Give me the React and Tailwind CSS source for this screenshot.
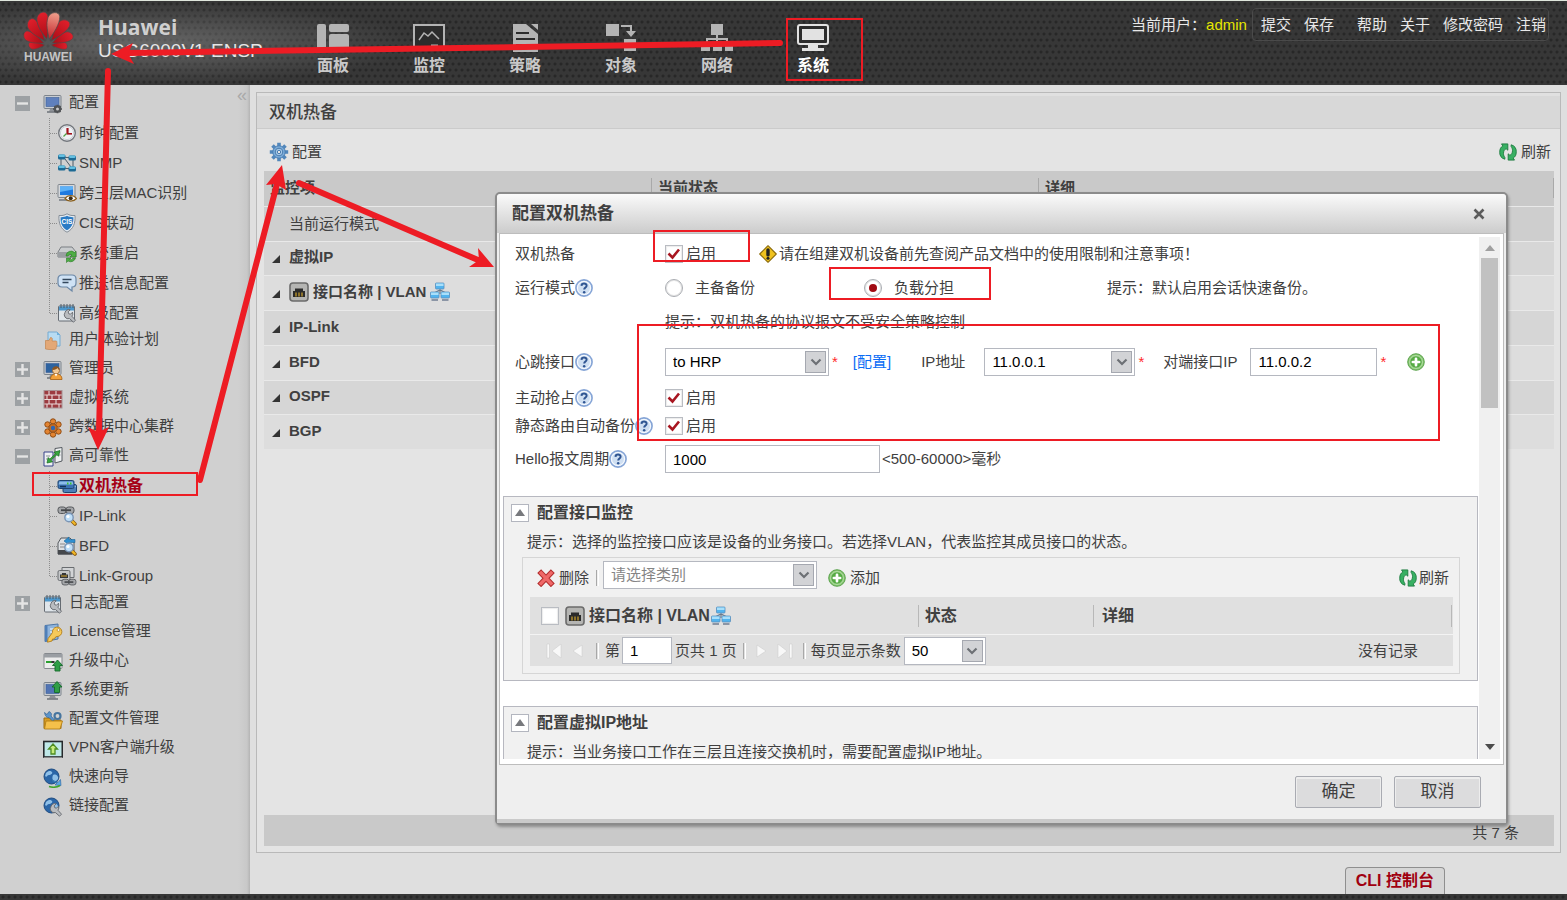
import React, { useState } from 'react';

/* ---------- small drawings ---------- */

function Svg({ size = 20, children, className = '' }) {
  return (
    <svg width={size} height={size} viewBox="0 0 20 20" fill="none" className={`shrink-0 ${className}`} aria-hidden="true">
      {children}
    </svg>
  );
}

const Wrench = () => (
  <g>
    <path d="M8 9.5a4 4 0 0 1 5.2-2.8l-2 2.2.5 1.8 1.8.5 2-2a4 4 0 0 1-.6 4l3.6 4-2 2-4-3.6A4 4 0 0 1 8 9.5z" fill="#b9bcc0" stroke="#63676c" strokeWidth="0.9" />
  </g>
);

const Magnifier = () => (
  <g>
    <path d="M15 15l3 3" stroke="#8a5a10" strokeWidth="3.6" strokeLinecap="round" />
    <path d="M15 15l2.8 2.8" stroke="#f2b825" strokeWidth="2.2" strokeLinecap="round" />
    <circle cx="12" cy="11.5" r="4.2" fill="#bfe0fa" stroke="#7b95b5" strokeWidth="1.4" />
    <circle cx="11" cy="10.5" r="1.6" fill="#fff" />
  </g>
);

const Chain = ({ y = 2 }) => (
  <g stroke="#55585c" strokeWidth="1">
    <rect x="1" y={y} width="8" height="6.5" rx="2.5" fill="#a4a6a9" />
    <rect x="9" y={y} width="8" height="6.5" rx="2.5" fill="#a4a6a9" />
    <path d={`M4 ${y + 3.2}h10`} stroke="#44474a" strokeWidth="1.8" />
  </g>
);

const UpArrow = ({ x = 0, y = 0 }) => (
  <path transform={`translate(${x} ${y})`} d="M5 0l5 5.5H7.5V11h-5V5.5H0z" fill="#2f9e46" stroke="#146a2b" strokeWidth="0.9" />
);

const Monitor = ({ fill = '#5f80bd' }) => (
  <g>
    <rect x="1" y="1.5" width="17" height="13" rx="1" fill="#c8ccd1" stroke="#7d848c" />
    <rect x="3" y="3.5" width="13" height="9" fill={fill} stroke="#3d5f96" strokeWidth="0.6" />
    <path d="M7 15h5l1 2.5H6z" fill="#8e9298" />
    <path d="M4 18h11" stroke="#72777d" strokeWidth="1.6" />
  </g>
);

const Notebook = () => (
  <g>
    <rect x="1.5" y="3" width="16" height="15" rx="1" fill="#dfe5ea" stroke="#656b72" />
    <path d="M2 3.5h15v4H2z" fill="#4c97cc" />
    <path d="M4 1v4M7 1v4M10 1v4M13 1v4M16 1v4" stroke="#4d5a66" strokeWidth="1" />
  </g>
);

const Globe = () => (
  <g>
    <circle cx="8.5" cy="8.5" r="7.5" fill="#2a66a8" stroke="#204c80" />
    <path d="M3 5c3-3 5-2 6-1s-1 3-3 3-2 3-4 1zM10 7c3-1 4 0 5 2s-2 5-4 4-2-4-1-6z" fill="#8fc0e8" />
  </g>
);

const treeIcons = {
  config: (
    <Svg>
      <Monitor />
      <path d="M14.500 10.700v8.600M10.200 15h8.600M11.500 12l6 6M17.500 12l-6 6" stroke="#505356" strokeWidth="1.800" />
      <circle cx="14.500" cy="15" r="2.600" fill="#c9c9c9" stroke="#505356" strokeWidth="2.200" />
    </Svg>
  ),
  clock: (
    <Svg>
      <circle cx="10" cy="10" r="8.300" fill="#f0f2f5" stroke="#73777d" strokeWidth="1.400" />
      <circle cx="10" cy="10" r="6.600" stroke="#cbd0d6" />
      <path d="M10.500 5v5.600" stroke="#a0121c" strokeWidth="2.200" />
      <path d="M9.500 10.800h5.500" stroke="#a0121c" strokeWidth="1.600" />
      <path d="M9.500 10.500l-3 3" stroke="#4ea045" strokeWidth="1.300" />
    </Svg>
  ),
  snmp: (
    <Svg>
      <path d="M5 4l10 1M4 5v10M16 6v10M5 15l10 1M8 6l6 8" stroke="#4b5a66" strokeWidth="1" />
      {[[1, 1.5], [11.5, 2.5], [1, 12.5], [11.5, 13.5]].map(([x, y]) => (
        <g key={`${x}-${y}`}>
          <rect x={x} y={y} width="7.500" height="5" rx="1.500" fill="#1d6a94" />
          <rect x={x + 0.5} y={y} width="6.500" height="2.500" rx="1.200" fill="#63c0e2" />
        </g>
      ))}
    </Svg>
  ),
  mac: (
    <Svg>
      <rect x="1" y="1.500" width="17" height="13" rx="1" fill="#d5d8dc" stroke="#80868d" />
      <rect x="3" y="3.500" width="13" height="8.500" fill="#1f7ae0" />
      <path d="M3 3.500h13v3L3 9z" fill="#5db1f7" />
      <path d="M2 17h8" stroke="#888d93" strokeWidth="2" />
      <path d="M8 15.500c3-4 8.500-4 11.500 0-3 3.500-8.500 3.500-11.500 0z" fill="#fff" stroke="#8a5f1d" strokeWidth="1.200" />
      <circle cx="13.700" cy="15.300" r="2" fill="#3a2a14" />
    </Svg>
  ),
  cis: (
    <Svg>
      <path d="M10 .8c2.500 1.600 5.300 2 8 1.700.5 7.500-1.500 13.500-8 16.700C3.500 16 1.500 10 2 2.500c2.700.3 5.500-.1 8-1.700z" fill="#e8edf2" stroke="#848d97" />
      <path d="M10 2.800c2.200 1.200 4.200 1.500 6.400 1.400.2 6-1.500 10.400-6.400 13-4.900-2.600-6.600-7-6.400-13 2.200.1 4.200-.2 6.400-1.400z" fill="#2b7bc4" />
      <text x="10" y="10.500" textAnchor="middle" fontSize="6.500" fontWeight="700" fill="#fff" fontFamily="Liberation Sans, sans-serif">CIS</text>
    </Svg>
  ),
  reboot: (
    <Svg>
      <path d="M4 4h11l4 5v5H1V9z" fill="#c9ccce" stroke="#7b7f83" />
      <path d="M1 9h18v5H1z" fill="#9b9fa3" />
      <path d="M9 13a5 5 0 0 1 8.500-3.500L19 8v6h-6l2-2a2.600 2.600 0 0 0-4 1zM18.500 15A5 5 0 0 1 11 18l-1.500 1.500V15H14l-1.500 1.500a2.600 2.600 0 0 0 3.500-1.500z" fill="#4eae45" stroke="#2c7a28" strokeWidth="0.600" />
    </Svg>
  ),
  message: (
    <Svg>
      <path d="M5 2h10c2.500 0 4 1.500 4 4v4c0 2.500-1.500 4-4 4v4l-5-4H5c-2.500 0-4-1.500-4-4V6c0-2.500 1.500-4 4-4z" fill="#cfe2f5" stroke="#6b87a6" strokeWidth="1.200" />
      <path d="M5.500 6.500h9M5.500 9.500h6" stroke="#33475c" strokeWidth="1.500" />
    </Svg>
  ),
  notes: (
    <Svg>
      <Notebook />
      <Wrench />
    </Svg>
  ),
  plan: (
    <Svg>
      <path d="M5 1h9l3 3v11H5z" fill="#b7dbf2" stroke="#76aad0" />
      <path d="M14 1v3h3" fill="#6fb1dd" />
      <path d="M2.500 9.500h3.500l1.500-3c1.500 0 2 .8 1.800 2.200L9 10h4c1 0 1.200 1.500.6 2 .7.700.6 1.800 0 2.200.5.800.2 1.800-.5 2.100.2 1-.2 2.200-1.500 2.200H6l-3.500-.5z" fill="#e3a877" stroke="#c4854f" strokeWidth="0.700" />
    </Svg>
  ),
  admin: (
    <Svg>
      <Monitor fill="#2d63a0" />
      <path d="M7.500 19.500c0-4 2-5.500 5.500-5.500s6 1.500 6 5.500z" fill="#f3a13a" stroke="#a35d12" strokeWidth="0.800" />
      <circle cx="13" cy="10.500" r="3.500" fill="#f2c896" stroke="#94622b" strokeWidth="0.800" />
      <path d="M9.300 10c0-5 7.500-5 7.500 0-2-.2-2-2-2-2s-2 2-5.500 2z" fill="#8a5524" />
      <path d="M11.500 14l1.500 2.500 1.500-2.500z" fill="#fff" />
    </Svg>
  ),
  wall: (
    <Svg>
      <rect x="1" y="1.500" width="18" height="17.500" fill="#9c3b40" />
      <path d="M1 6h18M1 10.500h18M1 15h18M6 2v4M13 2v4M9 6v4M16 6v4M4 6v4M6 10.500v4.500M13 10.500v4.500M9 15v4M16 15v4M4 15v4" stroke="#eadada" strokeWidth="1.100" />
      <rect x="1" y="1.500" width="18" height="17.500" stroke="#a89294" />
    </Svg>
  ),
  cluster: (
    <Svg>
      {[[10, 3.500], [15.500, 6.500], [15.500, 13.500], [10, 16.500], [4.500, 13.500], [4.500, 6.500]].map(([x, y]) => (
        <circle key={`${x}-${y}`} cx={x} cy={y} r="2.700" fill="#e38431" stroke="#8f4d16" />
      ))}
      <circle cx="10" cy="10" r="4.200" fill="#c86c22" stroke="#8f4d16" />
      <circle cx="10" cy="10" r="2.200" fill="#2e67b3" />
    </Svg>
  ),
  reliability: (
    <Svg>
      <path d="M12 1.500l7-1v13.500l-7 2z" fill="#eef0f2" stroke="#555a60" />
      <path d="M1 5h9v14H1z" fill="#eef0f2" stroke="#39438a" />
      <path d="M13.500 5h4M13.500 8h4M3 9h4M3 12h4" stroke="#8a9097" />
      <path d="M4 16l1.200-5.500 1.500 1.700 6-5.500L11 5.200l6-1.700-1.500 5.800-1.500-1.700-6 5.500 1.600 1.700z" fill="#37a83d" stroke="#186d20" strokeWidth="0.700" />
    </Svg>
  ),
  hotStandby: (
    <Svg>
      <rect x="6" y="8.500" width="13.500" height="8" rx="1.500" fill="#4d80b8" stroke="#1e4470" />
      <path d="M7 10.500h12" stroke="#8dbae4" strokeWidth="1.500" />
      <rect x="1" y="4.500" width="16" height="8" rx="1.500" fill="#3a73b4" stroke="#1e4470" />
      <path d="M2.500 5.500h13l1 3H1.500z" fill="#8cbde9" />
      <path d="M10 7.500h1.500M13 7.500h1.500" stroke="#3cc42c" strokeWidth="2" />
      <path d="M3 10.500h6" stroke="#133256" strokeWidth="1.500" />
    </Svg>
  ),
  ipLink: (
    <Svg>
      <Chain y={1} />
      <Magnifier />
    </Svg>
  ),
  bfd: (
    <Svg>
      <path d="M4 2h9l4 4v12H1V7z" fill="#dde0e3" stroke="#55595e" />
      <path d="M1 14h14v4.500H1z" fill="#45484c" />
      <path d="M3 8h5M3 11h5" stroke="#888" />
      <path d="M7 5l5-4v2.500h6v3h-6V9z" fill="#2f8fd0" stroke="#1d6598" strokeWidth="0.600" />
      <Magnifier />
    </Svg>
  ),
  linkGroup: (
    <Svg>
      <path d="M5 1.500h12v10H5z" fill="#d2d4d6" stroke="#696c70" />
      <rect x="1" y="4.500" width="12" height="10" rx="1.500" fill="#c4c6c8" stroke="#696c70" />
      <path d="M3 12V8.500h2V7h4v1.500h2V12z" fill="#35373a" />
      <path d="M5 11V9M7 11V9M9 11V9" stroke="#d9a82c" strokeWidth="1" />
      <g transform="translate(4 11.500) scale(.88)"><Chain y={2} /></g>
    </Svg>
  ),
  license: (
    <Svg>
      <path d="M2 2.500l13-1.500v15L2 18.500z" fill="#8fb4dc" stroke="#4f77a5" />
      <path d="M2 2.500h2.500v16L2 18.500z" fill="#4f7fb8" />
      <path d="M7 6h5M7 9h3" stroke="#fff" />
      <path d="M9.500 9.500a4.700 4.700 0 1 1 4.500 4l-1.500.5-1 2H9.500l-.5 2-4.500 1.200.5-3.500z" fill="#f5c95a" stroke="#b27e18" strokeWidth="0.900" />
      <circle cx="15.500" cy="7" r="1.400" fill="#fff" stroke="#b27e18" strokeWidth="0.700" />
    </Svg>
  ),
  upgrade: (
    <Svg>
      <rect x="1" y="1.500" width="18" height="15" rx="1" fill="#ececec" stroke="#85898e" />
      <path d="M1 2h18v3.500H1z" fill="#9a9ea3" />
      <path d="M3 10h8" stroke="#2aa02f" strokeWidth="2" />
      <path d="M8.500 10h3" stroke="#333" strokeWidth="2" />
      <UpArrow x={9.500} y={8} />
    </Svg>
  ),
  update: (
    <Svg>
      <Monitor fill="#5174b4" />
      <UpArrow x={9} y={0.500} />
    </Svg>
  ),
  files: (
    <Svg>
      <path d="M1 8h6l1.500 2H18v8.500H1z" fill="#d79b23" stroke="#9e6e10" />
      <circle cx="14.500" cy="6" r="3" stroke="#47759f" strokeWidth="2.200" />
      <path d="M1.500 2.500l2.500 2 2-3c2.500 1 3 3 2 4.500l3.500 4-2 1L6 7.500C4 8 2 6 1.500 2.500z" fill="#5b94cb" stroke="#33628f" strokeWidth="0.700" />
      <path d="M3 11h16.500L17 19H1.500z" fill="#f5c04a" stroke="#b37f17" strokeWidth="0.900" />
    </Svg>
  ),
  vpn: (
    <Svg>
      <rect x="0.800" y="2.500" width="18.500" height="15.500" fill="#bfe8e8" stroke="#26292c" strokeWidth="1.600" />
      <path d="M10 5l4.500 5H12v5H8v-5H5.500z" fill="#c5ec7c" stroke="#4d8c22" strokeWidth="1.300" />
      <path d="M1 18.500h18" stroke="#888" />
    </Svg>
  ),
  wizard: (
    <Svg>
      <Globe />
      <path d="M9 12l6 2.500 2.500-3 .5 6-6-.5 2-2-5-2z" fill="#5ba5e5" stroke="#27639c" strokeWidth="0.600" />
      <path d="M6 18.500c4 1.300 8 .8 11-1" stroke="#41a52c" strokeWidth="1.500" />
    </Svg>
  ),
  links: (
    <Svg>
      <Globe />
      <Wrench />
    </Svg>
  ),
};

// angle, width factor, length factor
const petals = [
  [-92, 0.6, 0.58], [92, 0.6, 0.58],
  [-66, 0.78, 0.8], [66, 0.78, 0.8],
  [-38, 0.9, 0.94], [38, 0.9, 0.94],
  [-12, 0.95, 1], [12, 0.95, 1],
];

function HuaweiLogo() {
  return (
    <svg width="52" height="40" viewBox="0 0 52 40" aria-hidden="true">
      <defs>
        <linearGradient id="petal" x1="0" y1="0" x2="0" y2="1">
          <stop offset="0" stopColor="#e01f2b" />
          <stop offset="1" stopColor="#a80d17" />
        </linearGradient>
        <linearGradient id="petalLight" x1="0" y1="0" x2="0" y2="1">
          <stop offset="0" stopColor="#f0a08c" />
          <stop offset="1" stopColor="#c2222a" />
        </linearGradient>
      </defs>
      <g transform="translate(26 35)">
        {petals.map(([angle, w, l]) => (
          <path
            key={angle} d="M0-6C-3-12-7-20-6-27-5-33 4-36 6-30 7.500-23 3.500-13 0-6z"
            transform={`rotate(${angle}) scale(${w} ${l})`}
            fill={angle === 12 ? 'url(#petalLight)' : 'url(#petal)'} stroke="#4a4a4a" strokeWidth="0.700"
          />
        ))}
      </g>
    </svg>
  );
}

const navIcons = {
  panel: (
    <g fill="#b4b4b4">
      <rect x="0" y="0" width="9" height="28" rx="2" />
      <rect x="12" y="0" width="20" height="8" rx="2" />
      <rect x="12" y="10" width="20" height="18" rx="2" />
    </g>
  ),
  monitor: (
    <g stroke="#b4b4b4" fill="none">
      <rect x="1" y="1" width="30" height="24" fill="#2c2c2c" strokeWidth="2" />
      <path d="M6 16l5-7 4 3 4-4 7 7" strokeWidth="1.500" />
      <path d="M18 22h7" strokeWidth="3" />
    </g>
  ),
  policy: (
    <g>
      <path d="M4 0h13l12 10v18H4z" fill="#b4b4b4" />
      <path d="M22 0h7v6z" fill="#b4b4b4" />
      <path d="M7 9h13M7 15h19M7 21h19" stroke="#2c2c2c" strokeWidth="2" />
    </g>
  ),
  object: (
    <g fill="#b4b4b4">
      <rect x="1" y="0" width="13" height="12" />
      <path d="M16 1h11v6h4l-5 6-5-6h4V3h-9z" />
      <rect x="19" y="15" width="12" height="12" />
    </g>
  ),
  network: (
    <g fill="#b4b4b4">
      <rect x="10" y="0" width="12" height="11" />
      <path d="M15 11h2v3h10v8h-2v-6h-8v6h-2v-6H7v6H5v-8h10z" />
      <rect x="0" y="20" width="9" height="7" />
      <rect x="12" y="20" width="9" height="7" />
      <rect x="24" y="20" width="8" height="7" />
    </g>
  ),
  system: (
    <g>
      <rect x="1" y="1" width="30" height="19" rx="2" fill="#2c2c2c" stroke="#e2e2e2" strokeWidth="2" />
      <rect x="5" y="5" width="22" height="11" fill="#e2e2e2" />
      <path d="M11 20h10v4h6v3H5v-3h6z" fill="#e2e2e2" />
    </g>
  ),
};

const GearIcon = () => (
  <Svg>
    <g stroke="#5287bb" strokeWidth="3.600">
      <path d="M10 .8v18.400M.8 10h18.400M3.500 3.500l13 13M16.500 3.500l-13 13" />
    </g>
    <circle cx="10" cy="10" r="6.200" fill="#7cacd9" stroke="#4a7eb3" />
    <circle cx="10" cy="10" r="3.800" fill="#a9cbea" stroke="#4a7cae" />
    <circle cx="10" cy="10" r="1.700" fill="#e6e6e6" stroke="#4a7cae" />
  </Svg>
);

const RefreshIcon = () => (
  <Svg size={18}>
    {[0, 180].map((turn) => (
      <path
        key={turn} transform={`rotate(${turn} 10 10)`}
        d="M6.500 18C2.500 17 .8 14 .8 10.500.8 6.500 2 4.500 4.300 3.300L2.800 1h7v7L7.800 6.200C6 7.500 5 9 5 11.500c0 2.500.8 3.500 1.500 4.500z"
        fill="#38b063" stroke="#1c7a3e" strokeWidth="1" strokeLinejoin="round"
      />
    ))}
  </Svg>
);

const AddIcon = () => (
  <Svg size={18}>
    <circle cx="10" cy="10" r="9.200" fill="#8cc978" stroke="#4c9a3c" />
    <circle cx="10" cy="10" r="7" fill="#57ab45" stroke="#d5efca" strokeWidth="0.800" />
    <path d="M10 6.500v7M6.500 10h7" stroke="#fff" strokeWidth="3" strokeLinecap="round" />
  </Svg>
);

const DeleteIcon = () => (
  <Svg size={18}>
    <path d="M4.500 4.500l11 11.500M15.500 4.500l-11 11.500" stroke="#b32c2c" strokeWidth="6" strokeLinecap="square" />
    <path d="M4.500 4.500l11 11.500M15.500 4.500l-11 11.500" stroke="#ef6868" strokeWidth="3.800" strokeLinecap="square" />
  </Svg>
);

const WarnIcon = () => (
  <Svg size={18}>
    <path d="M10 .8L19.200 10 10 19.200.8 10z" fill="#f0c21e" stroke="#8b6a08" strokeWidth="1.200" strokeLinejoin="round" />
    <path d="M10 5.500v5.500" stroke="#222" strokeWidth="3.800" strokeLinecap="round" />
    <circle cx="10" cy="14.800" r="1.700" fill="#222" />
  </Svg>
);

const PortIcon = () => (
  <Svg>
    <rect x="1" y="1" width="18" height="18" rx="3" fill="#b5b5b3" stroke="#6b6b6b" strokeWidth="1.600" />
    <path d="M4 15V9h2V6.500h8V9h2v6z" fill="#2b2b2b" />
    <path d="M7 14.500v-4M10 14.500v-4M13 14.500v-4" stroke="#c39a2b" strokeWidth="1.300" />
  </Svg>
);

const VlanIcon = () => (
  <Svg size={20}>
    <path d="M10 6v6M4 11l6-3 6 3" stroke="#6a7a8a" strokeWidth="1.200" />
    {[[5.500, 1], [0.500, 10], [11, 10]].map(([x, y]) => (
      <g key={`${x}-${y}`}>
        <rect x={x} y={y} width="8.500" height="6" rx="0.800" fill="#52b4ee" stroke="#5c8fbc" strokeWidth="0.800" />
        <path d={`M${x + 0.500} ${y + 0.500}h7.500v2.500h-7.500z`} fill="#a9dffa" />
      </g>
    ))}
    <path d="M1.500 18h6.500M12 18h6.500" stroke="#8b95a5" strokeWidth="1.800" />
  </Svg>
);

/* ---------- shared controls ---------- */

function HelpButton() {
  return (
    <button type="button" aria-label="帮助" className="shrink-0">
      <svg width="18" height="18" viewBox="0 0 20 20" aria-hidden="true">
        <circle cx="10" cy="10" r="9" fill="#dbe8f8" stroke="#86a5d6" strokeWidth="1.800" />
        <circle cx="10" cy="10" r="7.200" fill="#cfdff2" stroke="#fff" />
        <path d="M7.200 7.600c.2-3.400 5.800-3.300 5.700-.1 0 2-2.700 2-2.700 4.300" fill="none" stroke="#2f5592" strokeWidth="2.200" />
        <circle cx="10.200" cy="14.700" r="1.400" fill="#2f5592" />
      </svg>
    </button>
  );
}

function CheckBox({ label, defaultChecked, name }) {
  return (
    <label className="flex items-center gap-[3px]">
      <span className="relative h-[18px] w-[18px]">
        <input
          type="checkbox" defaultChecked={defaultChecked} aria-label={label || name}
          className="peer block h-[18px] w-[18px] appearance-none border border-[#b9bcc2] bg-white shadow-[inset_0_0_1px_1px_#ececec]"
        />
        <svg width="18" height="18" viewBox="0 0 18 18" className="pointer-events-none absolute inset-0 hidden peer-checked:block" aria-hidden="true">
          <path d="M3.500 8.500l4 4 6.500-8" fill="none" stroke="#a81620" strokeWidth="2.600" />
        </svg>
      </span>
      {label}
    </label>
  );
}

function ModeRadio({ label, checked, onChange }) {
  return (
    <label className="flex items-center gap-3">
      <span className="relative h-[18px] w-[18px]">
        <input
          type="radio" name="mode" checked={checked} onChange={onChange}
          className="peer block h-[18px] w-[18px] appearance-none rounded-full border border-[#a9acb1] bg-white shadow-[inset_0_0_0_1px_#e4e4e4]"
        />
        <span className="pointer-events-none absolute inset-[5px] hidden rounded-full bg-[#a00a12] peer-checked:block" />
      </span>
      {label}
    </label>
  );
}

function SelectBox({ label, options, className = '', textClass = 'text-black' }) {
  return (
    <div className={`relative shrink-0 ${className}`}>
      <select aria-label={label} className={`h-7 w-full appearance-none border border-[#b5b8c0] bg-white pl-[7px] pr-7 outline-none ${textClass}`}>
        {options.map((o) => <option key={o}>{o}</option>)}
      </select>
      <span className="pointer-events-none absolute right-[3px] top-[3px] flex h-[22px] w-[21px] items-center justify-center border border-[#a5a8b0] bg-[#d2d3d6]">
        <svg width="12" height="8" viewBox="0 0 12 8" aria-hidden="true">
          <path d="M1.500 1.500L6 6l4.500-4.500" fill="none" stroke="#6d7075" strokeWidth="2.200" />
        </svg>
      </span>
    </div>
  );
}

const Required = () => <span className="ml-[3px] text-[#ff2a2a]">*</span>;

const Sep = () => <span className="h-4 w-[3px] shrink-0 border-l border-r border-l-[#a8a8a8] border-r-white" />;

/* ---------- header ---------- */

const navItems = [
  ['panel', '面板'],
  ['monitor', '监控'],
  ['policy', '策略'],
  ['object', '对象'],
  ['network', '网络'],
  ['system', '系统'],
];

const dots = 'bg-[#373737] bg-[radial-gradient(circle_at_3px_3px,#262626_0,#282828_1px,transparent_2px),radial-gradient(circle_at_3px_3px,#262626_0,#282828_1px,transparent_2px)] bg-[size:6px_12px] bg-[position:0_0,3px_6px]';

function Header() {
  return (
    <header className={`relative flex h-[85px] shrink-0 border-t border-[#dfe6dc] ${dots}`}>
      <div className="pointer-events-none absolute inset-y-0 left-0 w-[420px] bg-[radial-gradient(ellipse_at_35%_50%,rgba(150,150,150,0.5),transparent_70%)]" />
      <div className="relative flex w-[285px] shrink-0">
        <div className="ml-[22px] flex w-[76px] flex-col pt-[9px]">
          <HuaweiLogo />
          <span className="w-[52px] text-center text-[12px] leading-[14px] font-bold text-[#c4c4c4]">HUAWEI</span>
        </div>
        <div className="pt-3">
          <div className="font-['Open_Sans',sans-serif] text-[21px] leading-7 font-bold text-[#cfcfcf]">Huawei</div>
          <div className="text-[19px] leading-5 text-[#e6e6e6]">USG6000V1-ENSP</div>
        </div>
      </div>
      <nav className="relative flex">
        {navItems.map(([id, label]) => (
          <a
            key={id} href={`#${id}`}
            className={`flex w-24 flex-col items-center pt-[23px] text-[16px] leading-6 font-bold ${id === 'system' ? 'text-white' : 'text-[#c9c9c9]'}`}
          >
            <svg width="32" height="28" viewBox="0 0 32 28" className="mb-[2px]" aria-hidden="true">{navIcons[id]}</svg>
            {label}
          </a>
        ))}
      </nav>
      <div className="relative ml-auto mr-[18px] mt-[7px] flex h-[33px] items-center text-[#e8e8e8]">
        <span>当前用户：</span>
        <span className="mr-[5px] text-[#e6e600]">admin</span>
        <div className="flex h-full items-center gap-[13px] rounded-sm border border-[#4a4a4a] pr-[2px] pl-2">
          <a href="#commit">提交</a>
          <a href="#save" className="mr-[10px]">保存</a>
          <a href="#help">帮助</a>
          <a href="#about">关于</a>
          <a href="#password">修改密码</a>
          <a href="#logout">注销</a>
        </div>
      </div>
    </header>
  );
}

/* ---------- sidebar ---------- */

const tree = [
  {
    icon: 'config', label: '配置', open: true,
    children: [
      ['clock', '时钟配置'],
      ['snmp', 'SNMP'],
      ['mac', '跨三层MAC识别'],
      ['cis', 'CIS联动'],
      ['reboot', '系统重启'],
      ['message', '推送信息配置'],
      ['notes', '高级配置'],
    ],
  },
  { icon: 'plan', label: '用户体验计划' },
  { icon: 'admin', label: '管理员', open: false },
  { icon: 'wall', label: '虚拟系统', open: false },
  { icon: 'cluster', label: '跨数据中心集群', open: false },
  {
    icon: 'reliability', label: '高可靠性', open: true,
    children: [
      ['hotStandby', '双机热备'],
      ['ipLink', 'IP-Link'],
      ['bfd', 'BFD'],
      ['linkGroup', 'Link-Group'],
    ],
  },
  { icon: 'notes', label: '日志配置', open: false },
  { icon: 'license', label: 'License管理' },
  { icon: 'upgrade', label: '升级中心' },
  { icon: 'update', label: '系统更新' },
  { icon: 'files', label: '配置文件管理' },
  { icon: 'vpn', label: 'VPN客户端升级' },
  { icon: 'wizard', label: '快速向导' },
  { icon: 'links', label: '链接配置' },
];

function Sidebar() {
  return (
    <aside className="relative w-[250px] shrink-0 overflow-hidden bg-[#d0d0d0] bg-[linear-gradient(to_left,#b4b4b4,#c8c8c8_3px,#d0d0d0_12px)] pt-1">
      <button type="button" aria-label="收起" className="absolute top-0 right-[2px] h-5 w-3 text-[18px] leading-5 text-[#a9a9a9]">«</button>
      <ul>
        {tree.map((node) => (
          <li key={node.label}>
            <div className="flex h-[29px] items-center pl-[15px]">
              {node.open === undefined ? (
                <span className="w-[15px]" />
              ) : (
                <button type="button" aria-label={node.open ? '折叠' : '展开'} className="flex h-[15px] w-[15px] items-center justify-center bg-[#9da1a4]">
                  <svg width="11" height="11" viewBox="0 0 11 11" aria-hidden="true">
                    <path d={node.open ? 'M0 5.500h11' : 'M0 5.500h11M5.500 0v11'} stroke="#e4e4e4" strokeWidth="2.400" />
                  </svg>
                </button>
              )}
              <span className="ml-[13px] mr-[6px]">{treeIcons[node.icon]}</span>
              <a href={`#${node.icon}`} className="pb-1">{node.label}</a>
            </div>
            {node.children && (
              <ul className="relative -mb-[2px]">
                <li aria-hidden="true" className="absolute top-0 bottom-[15px] left-[49px] border-l border-dotted border-[#8c8c8c]" />
                {node.children.map(([icon, label]) => (
                  <li key={label} className="flex h-[30px] items-center pl-[50px]">
                    <span className="w-[7px] border-t border-dotted border-[#8c8c8c]" />
                    {treeIcons[icon]}
                    <a href={`#${icon}`} className={`ml-[2px] ${icon === 'hotStandby' ? 'text-[16px] font-bold text-[#a50016]' : ''}`}>{label}</a>
                  </li>
                ))}
              </ul>
            )}
          </li>
        ))}
      </ul>
    </aside>
  );
}

/* ---------- status panel ---------- */

const groups = ['虚拟IP', '接口名称 | VLAN', 'IP-Link', 'BFD', 'OSPF', 'BGP'];

function StatusPanel() {
  return (
    <section className="ml-[6px] mr-[6px] mt-[7px] flex flex-1 flex-col border border-[#b9b9b9] bg-[#e4e4e4]">
      <h1 className="flex h-9 shrink-0 items-center border-b border-t-[3px] border-b-[#cbcbcb] border-t-[#e0e0e0] bg-[#d8d8d8] pl-3 pt-[2px] text-[17px] font-medium">双机热备</h1>
      <div className="flex h-[42px] shrink-0 items-center justify-between pl-3 pr-[9px] pt-[3px]">
        <button type="button" className="flex items-center gap-[3px]"><GearIcon />配置</button>
        <button type="button" className="flex items-center gap-1"><RefreshIcon />刷新</button>
      </div>
      <div className="ml-[7px] mr-[6px] flex flex-1 flex-col">
        <table className="w-full table-fixed border-collapse text-left">
          <thead>
            <tr className="h-[35px] bg-[#c9c9c9] font-bold">
              <th className="w-[30%] pl-[6px]">监控项</th>
              <th className="w-[30%]"><span className="block h-5 border-l border-[#a9a9a9] pl-[6px] leading-5">当前状态</span></th>
              <th className="w-[40%]"><span className="block h-5 border-x border-[#a9a9a9] pl-[6px] leading-5">详细</span></th>
            </tr>
          </thead>
          <tbody>
            <tr className="h-[35px] border-t border-[#e9e9e9] bg-[#cecece]">
              <td className="pl-[25px]">当前运行模式</td>
              <td />
              <td />
            </tr>
            {groups.map((g, i) => (
              <tr key={g} className={`border-t border-[#e9e9e9] odd:bg-[#dddddd] even:bg-[#d6d6d6] ${i % 4 === 0 ? 'h-[34px]' : 'h-[35px]'}`}>
                <td className="pb-[2px] pl-2" colSpan={3}>
                  <div className="flex items-center font-bold">
                    <svg width="8" height="8" viewBox="0 0 8 8" className="mr-[9px] mt-1" aria-hidden="true"><path d="M8 0v8H0z" fill="#333" /></svg>
                    {i === 1 && <span className="mr-1"><PortIcon /></span>}
                    {g}
                    {i === 1 && <span className="ml-1"><VlanIcon /></span>}
                  </div>
                </td>
              </tr>
            ))}
          </tbody>
        </table>
        <div className="mb-[6px] mt-auto flex h-[31px] items-center justify-end bg-[#c9c9c9] pr-[35px] pt-1">共 7 条</div>
      </div>
    </section>
  );
}

/* ---------- dialog ---------- */

function Row({ label, help, className, children }) {
  return (
    <div className={`flex items-center ${className}`}>
      <div className="flex w-[150px] shrink-0 items-center whitespace-nowrap">
        {label}
        {help && <HelpButton />}
      </div>
      {children}
    </div>
  );
}

function Fieldset({ title, hint, className = '', children }) {
  return (
    <section className={`border border-[#b7b8c0] bg-[#f1f1f1] ${className}`}>
      <h3 className="flex h-[30px] items-center gap-2 pl-[7px] pt-[1px] text-[16px] font-bold">
        <button type="button" aria-label="收起" className="flex h-[18px] w-[18px] items-center justify-center border border-[#b3b6bf] bg-white">
          <svg width="10" height="7" viewBox="0 0 10 7" aria-hidden="true"><path d="M5 0l5 7H0z" fill="#77797d" /></svg>
        </button>
        {title}
      </h3>
      <p className="flex h-[30px] items-center pl-[23px]">{hint}</p>
      {children}
    </section>
  );
}

function PagerButton({ label, d, flip }) {
  return (
    <button type="button" aria-label={label}>
      <svg width="16" height="16" viewBox="0 0 16 16" className={flip ? '-scale-x-100' : ''} aria-hidden="true">
        <path d={d} fill="#f8f8f8" stroke="#c8c8c8" strokeWidth="0.500" />
      </svg>
    </button>
  );
}

const firstPath = 'M1 1h2.500v14H1zM15 1v14L6 8z';
const prevPath = 'M12 2v12L3 8z';

function MonitorTable() {
  return (
    <div className="mb-[6px] ml-[18px] mr-[17px] border border-[#d6d6d6] pb-[7px]">
      <div className="flex h-[39px] items-center pl-[14px] pr-[10px]">
        <div className="flex flex-1 items-center">
          <button type="button" className="flex items-center gap-1"><DeleteIcon />删除</button>
          <span className="mx-[7px] flex"><Sep /></span>
          <div className="-mt-[6px] -ml-[3px]"><SelectBox label="类别" options={['请选择类别']} className="w-[214px]" textClass="text-[#858585]" /></div>
          <button type="button" className="ml-[11px] flex items-center gap-1"><AddIcon />添加</button>
        </div>
        <button type="button" className="flex items-center gap-[2px]"><RefreshIcon />刷新</button>
      </div>
      <div className="ml-[7px] mr-[6px]">
        <table className="w-full table-fixed border-collapse bg-[#e0e0e0] text-left text-[16px]">
          <thead>
            <tr className="h-[37px]">
              <th className="w-[42%] pl-[11px]">
                <div className="flex items-center">
                  <CheckBox name="全选" />
                  <span className="ml-[6px] mr-1"><PortIcon /></span>
                  接口名称 | VLAN
                  <span className="ml-[1px]"><VlanIcon /></span>
                </div>
              </th>
              <th className="w-[19%]"><span className="block border-l border-[#b8b8b8] pl-[6px] leading-[22px]">状态</span></th>
              <th className="w-[39%] pr-[1px]"><span className="block border-x border-[#b8b8b8] pl-2 leading-[22px]">详细</span></th>
            </tr>
          </thead>
        </table>
        <div className="flex h-8 items-center border-t border-[#f3f3f3] bg-[#e0e0e0] pl-4 pr-[35px]">
          <PagerButton label="首页" d={firstPath} />
          <span className="ml-2 mr-[10px] flex"><PagerButton label="上一页" d={prevPath} /></span>
          <Sep />
          <span className="ml-[6px] mr-[2px]">第</span>
          <input type="text" defaultValue="1" aria-label="页码" className="h-[27px] w-[50px] border border-[#b5b8c0] bg-white pl-[7px] text-black outline-none" />
          <span className="ml-[3px] mr-[6px]">页共 1 页</span>
          <Sep />
          <span className="ml-[7px] mr-2 flex"><PagerButton label="下一页" d={prevPath} flip /></span>
          <PagerButton label="末页" d={firstPath} flip />
          <span className="ml-[10px] mr-[5px] flex"><Sep /></span>
          <span className="mr-[3px]">每页显示条数</span>
          <SelectBox label="每页显示条数" options={['50', '100']} className="w-[82px]" />
          <span className="ml-auto">没有记录</span>
        </div>
      </div>
    </div>
  );
}

function Dialog() {
  const [mode, setMode] = useState('load');
  return (
    <div
      role="dialog" aria-labelledby="dlg-title"
      className="absolute top-[107px] bottom-[69px] left-[245px] right-[59px] flex flex-col rounded-[5px] border-2 border-[#8b8b8b] bg-[#efefef] shadow-[1px_2px_3px_rgba(0,0,0,0.3)]"
    >
      <div className="flex h-[39px] shrink-0 items-center justify-between rounded-t-[4px] bg-linear-to-b from-[#fafafa] to-[#cccccc] pl-[15px] pr-[21px]">
        <h2 id="dlg-title" className="text-[17px] font-bold">配置双机热备</h2>
        <button type="button" aria-label="关闭">
          <svg width="12" height="12" viewBox="0 0 12 12" aria-hidden="true"><path d="M1.500 1.500l9 9M10.500 1.500l-9 9" stroke="#5b5b5b" strokeWidth="2.600" /></svg>
        </button>
      </div>
      <div className="mx-[2px] flex min-h-0 flex-1 border border-[#bdbdbd] bg-white pb-[5px] pt-[3px] pr-[3px]">
        <form className="min-w-0 flex-1 overflow-hidden pl-[3px] pr-[1px]" onSubmit={(e) => e.preventDefault()}>
          <div className="pl-3">
            <Row label="双机热备" className="h-[34px]">
              <CheckBox label="启用" defaultChecked />
              <span className="ml-[43px] flex items-center gap-[2px] whitespace-nowrap"><WarnIcon />请在组建双机设备前先查阅产品文档中的使用限制和注意事项！</span>
            </Row>
            <Row label="运行模式" help className="h-[34px]">
              <div className="w-[199px]"><ModeRadio label="主备备份" checked={mode === 'backup'} onChange={() => setMode('backup')} /></div>
              <div className="w-[243px]"><ModeRadio label="负载分担" checked={mode === 'load'} onChange={() => setMode('load')} /></div>
              <span className="whitespace-nowrap">提示：默认启用会话快速备份。</span>
            </Row>
            <Row className="h-[34px]">提示：双机热备的协议报文不受安全策略控制</Row>
            <Row label="心跳接口" help className="h-[45px]">
              <SelectBox label="心跳接口" options={['to HRP']} className="w-[164px]" />
              <Required />
              <a href="#iface" className="ml-[15px] whitespace-nowrap text-[#0a6cf5]">[配置]</a>
              <span className="ml-[30px] mr-[19px] whitespace-nowrap">IP地址</span>
              <SelectBox label="IP地址" options={['11.0.0.1']} className="w-[151px]" />
              <Required />
              <label htmlFor="peer" className="ml-[19px] mr-[13px] whitespace-nowrap">对端接口IP</label>
              <input id="peer" type="text" defaultValue="11.0.0.2" className="h-7 w-[127px] border border-[#b5b8c0] pl-[7px] text-black outline-none" />
              <Required />
              <button type="button" aria-label="添加" className="ml-[21px]"><AddIcon /></button>
            </Row>
            <Row label="主动抢占" help className="h-7"><CheckBox label="启用" defaultChecked /></Row>
            <Row label="静态路由自动备份" help className="h-7"><CheckBox label="启用" defaultChecked /></Row>
            <Row label={<label htmlFor="hello">Hello报文周期</label>} help className="h-[38px]">
              <input id="hello" type="text" defaultValue="1000" className="h-7 w-[215px] border border-[#b5b8c0] pl-[7px] text-black outline-none" />
              <span className="ml-[2px]">&lt;500-60000&gt;毫秒</span>
            </Row>
          </div>
          <Fieldset title="配置接口监控" hint="提示：选择的监控接口应该是设备的业务接口。若选择VLAN，代表监控其成员接口的状态。" className="mt-[18px]">
            <MonitorTable />
          </Fieldset>
          <Fieldset title="配置虚拟IP地址" hint="提示：当业务接口工作在三层且连接交换机时，需要配置虚拟IP地址。" className="mt-[25px] h-[200px]" />
        </form>
        <div className="flex w-[21px] shrink-0 flex-col items-center bg-[#f0f0f0]">
          <svg width="10" height="6" viewBox="0 0 10 6" className="mt-2" aria-hidden="true"><path d="M5 0l5 6H0z" fill="#a0a0a0" /></svg>
          <div className="mt-[7px] h-[150px] w-[17px] bg-[#c1c1c1]" />
          <svg width="10" height="6" viewBox="0 0 10 6" className="mb-[9px] mt-auto" aria-hidden="true"><path d="M5 6l5-6H0z" fill="#4b4b4b" /></svg>
        </div>
      </div>
      <div className="flex h-[58px] shrink-0 items-center justify-end gap-3 border-b-4 border-[#cacaca] pr-[25px] text-[17px]">
        <button type="button" className="h-8 w-[87px] rounded-[2px] border border-[#a9abb2] bg-[#dcdcdd] shadow-[inset_0_1px_0_1px_#ededed]">确定</button>
        <button type="button" className="h-8 w-[87px] rounded-[2px] border border-[#a9abb2] bg-[#dcdcdd] shadow-[inset_0_1px_0_1px_#ededed]">取消</button>
      </div>
    </div>
  );
}

/* ---------- red walkthrough marks ---------- */

function Marks() {
  return (
    <svg width="1567" height="900" viewBox="0 0 1567 900" className="pointer-events-none absolute top-0 left-0" aria-hidden="true">
      <g fill="none" stroke="#ed1c24" strokeWidth="2">
        <rect x="787" y="19" width="75" height="61" />
        <rect x="33" y="473" width="164" height="22" />
        <rect x="654" y="231" width="95" height="30" />
        <rect x="830" y="268" width="160" height="31" />
        <rect x="638" y="325" width="801" height="115" />
      </g>
      <g stroke="#ed1c24" strokeWidth="6" strokeLinecap="round">
        <path d="M780 43L128 53" />
        <path d="M108 71L99 432" />
        <path d="M200 480L277 184" />
        <path d="M299 183L478 260" />
      </g>
      <g fill="#ed1c24">
        <path d="M111 54l22-11-5 10.500 6 10.500z" />
        <path d="M98 450l-10-23 10 5 11-5z" />
        <path d="M282 165l-16 20 10-1 10 6z" />
        <path d="M494 267l-16-19 1 12-10 7z" />
      </g>
    </svg>
  );
}

export default function App() {
  return (
    <div className="relative flex h-screen min-h-[700px] flex-col overflow-hidden bg-[#dfdfdf] font-['Liberation_Sans','Noto_Sans_CJK_SC',sans-serif] text-[15px] leading-5 text-[#404040]">
      <Header />
      <div className="flex min-h-0 flex-1">
        <Sidebar />
        <main className="relative flex min-w-0 flex-1 flex-col">
          <StatusPanel />
          <div className="flex h-[41px] shrink-0 items-end justify-end pr-[122px]">
            <button type="button" className="h-[27px] rounded-t-[4px] border border-b-0 border-[#8f8f8f] bg-[#d6d6d6] px-[10px] text-[16px] font-bold text-[#a00010]">CLI 控制台</button>
          </div>
          <Dialog />
        </main>
      </div>
      <footer className={`h-[6px] shrink-0 ${dots}`} />
      <Marks />
    </div>
  );
}
